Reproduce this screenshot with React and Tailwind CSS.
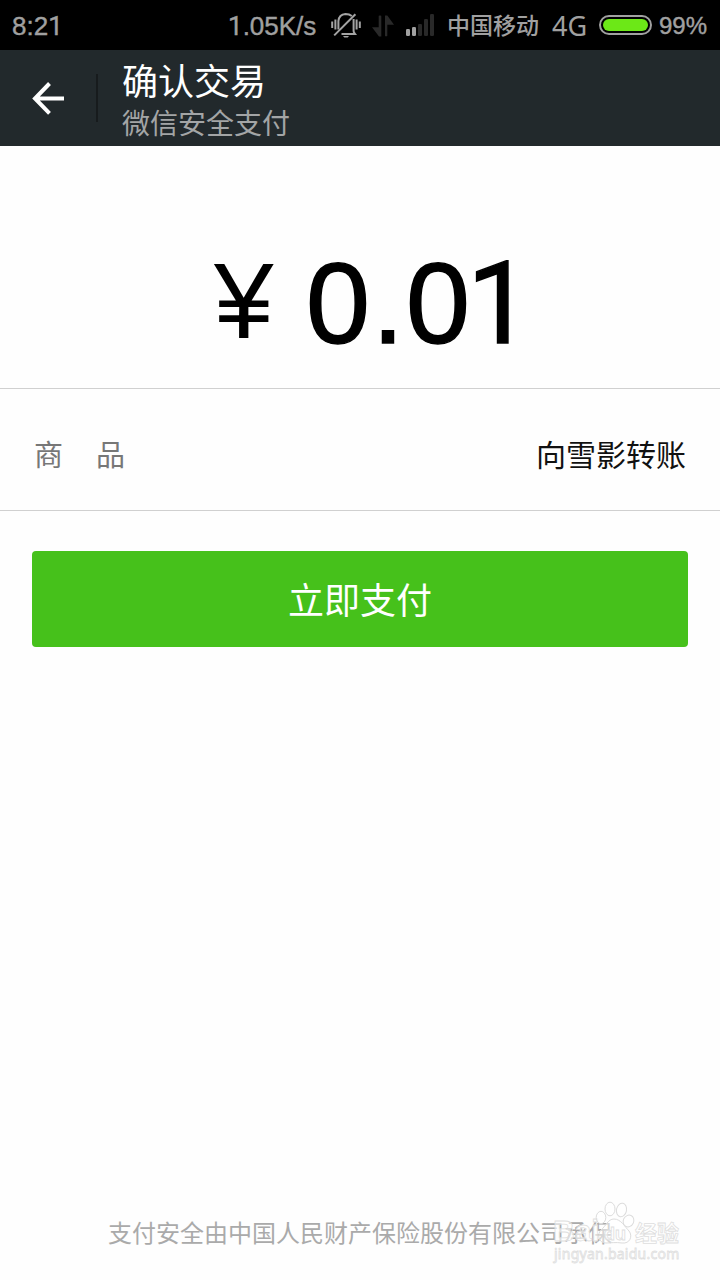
import React from 'react';

const MuteIcon = () => (
  <svg width="30" height="28" viewBox="0 0 30 28" fill="none" stroke="#a4a4a4" strokeWidth="2">
    <path d="M1.2 10.5v6.5M4.4 8.5V18.5M25.6 8.5V18.5M28.8 10.5v6.5" />
    <path d="M7.4 18.5V10C7.8 5.4 10.5 3.4 14.5 3c3 0 4.6.6 6.3 2" />
    <path d="M22.6 8v12c0 1.4.8 2 1.5 3H10.5" />
    <path d="M12 25h6l-1.3 1.6h-3.4z" fill="#a4a4a4" stroke="none" />
    <path d="M3.2 24.4 24.4 3.2" />
  </svg>
);

const DataIcon = () => (
  <svg width="22" height="22" viewBox="0 0 22 22" fill="#292929">
    <path d="M6.7 1.2C6.7.4 9.3.4 9.3 1.2V21.5H7L0 12.3h6.7z" />
    <path d="M13 .5h2.3L22 9.7h-6.7v11c0 .8-2.3.8-2.3 0z" />
  </svg>
);

const SignalIcon = () => (
  <svg width="28" height="22" viewBox="0 0 28 22">
    <g fill="#a0a0a0">
      <rect x="0" y="15" width="4" height="7" rx="1.2" />
      <rect x="6" y="13" width="4" height="9" rx="1.2" />
    </g>
    <g fill="#292929">
      <rect x="12" y="10" width="4" height="12" rx="1.2" />
      <rect x="18" y="5" width="4" height="17" rx="1.2" />
      <rect x="24" y="0" width="4" height="22" rx="1.2" />
    </g>
  </svg>
);

// Roboto's "1" has no foot, unlike Liberation Sans
const One = () => <span className="font-['Roboto',sans-serif]">1</span>;

function StatusBar() {
  return (
    <header className="flex h-[50px] items-center bg-black pt-[2px] pl-3 font-['Liberation_Sans',sans-serif] text-[26px] leading-none whitespace-nowrap text-[#a0a0a0]">
      <span className="w-[216px] [-webkit-text-stroke:0.4px_#a0a0a0]">8:2<One /></span>
      <span className="w-[103px] [-webkit-text-stroke:0.4px_#a0a0a0]"><One />.05K/s</span>
      <span className="-mt-[2px] w-[41px]"><MuteIcon /></span>
      <span className="w-[34px]"><DataIcon /></span>
      <span className="-mt-[2px] w-[41px]"><SignalIcon /></span>
      <span className="-mt-[3px] w-[105px] font-['Noto_Sans_CJK_SC',sans-serif] text-[23px] font-medium">中国移动</span>
      <span className="-mt-[2px] w-[47px] font-['Noto_Sans',sans-serif] text-[27px]">4G</span>
      <span className="-mt-[2px] mr-[7px] h-5 w-[53px] rounded-full border-2 border-[#a0a0a0] p-[2px]">
        <span className="block h-full rounded-full bg-[#6ce817]" />
      </span>
      <span className="text-[24px] [-webkit-text-stroke:0.4px_#a0a0a0]">99%</span>
    </header>
  );
}

function TitleBar() {
  return (
    <div className="flex h-24 items-center bg-[#22292c]">
      <svg className="ml-8" width="32" height="34" viewBox="0 0 32 34" fill="none" stroke="#fff" strokeWidth="4">
        <path d="M17.5 2.5 3 17.5l14.5 14.8M3 17.5h29" />
      </svg>
      <div className="ml-8 h-12 w-[2px] bg-[#171b1d]" />
      <div className="ml-6">
        <h1 className="mt-[3px] text-[36px] leading-[44px] text-white">确认交易</h1>
        <p className="text-[28px] leading-[42px] text-[#a3a5a6]">微信安全支付</p>
      </div>
    </div>
  );
}

function Watermark() {
  return (
    <div className="absolute top-[1200px] left-[551px] h-[64px] w-[130px] text-white/60 [-webkit-text-stroke:0.8px_#dedede]">
      <span className="absolute top-[14px] left-[2px] font-['Liberation_Sans',sans-serif] text-[30px] leading-[34px] font-bold">Bai</span>
      <svg className="absolute top-0 left-[42px]" width="42" height="44" viewBox="0 0 42 44" fill="#fff" fillOpacity="0.5" stroke="#dcdcdc">
        <ellipse cx="8" cy="17.5" rx="4.8" ry="6.2" />
        <ellipse cx="17" cy="9" rx="5" ry="6.8" />
        <ellipse cx="28.5" cy="10" rx="5" ry="6.8" transform="rotate(12 28.5 10)" />
        <ellipse cx="35.5" cy="21" rx="5.2" ry="6" transform="rotate(25 35.5 21)" />
        <path d="M21 19c-6 0-8 7-13 11-4 4-3 13 5 13 4 0 10-1 16 0 8 1 11-7 7-12-4-4-8-12-15-12z" />
      </svg>
      <span className="absolute top-[21px] left-[53px] font-['Liberation_Sans',sans-serif] text-[18px] leading-[26px] font-bold">du</span>
      <span className="absolute top-[16px] left-[84px] text-[22px] leading-[30px] font-bold">经验</span>
      <span className="absolute top-[44px] left-[3px] font-['Noto_Sans',sans-serif] text-[14px] leading-[20px] tracking-[0.25px]">jingyan.baidu.com</span>
    </div>
  );
}

export default function App() {
  return (
    <div className="relative flex h-[1280px] w-[720px] flex-col overflow-hidden bg-[#fefefe] font-['Noto_Sans_CJK_SC',sans-serif]">
      <StatusBar />
      <TitleBar />

      <div className="flex h-[243px] items-end border-b border-[#d0d0d0] pl-[214px] font-['Liberation_Sans',sans-serif] leading-none text-black">
        <span className="mb-[33px] w-[92px] text-[107px]">¥</span>
        <span className="mb-[27px] text-[115px] tracking-[2px] [-webkit-text-stroke:1.5px_#000]">0.0<span className="-ml-[5px]"><One /></span></span>
      </div>

      <div className="flex h-[122px] items-center justify-between border-b border-[#d0d0d0] px-[34px] pt-2">
        <span className="text-[29px] text-[#777]">商<span className="ml-[33px]">品</span></span>
        <span className="text-[30px] text-[#111]">向雪影转账</span>
      </div>

      <button className="mx-8 mt-10 h-24 rounded-[4px] bg-[#46c11b] pb-[2px] text-[36px] text-white">立即支付</button>

      <footer className="mt-auto pb-[30px] text-center text-[24px] leading-[36px] text-[#aaa]">
        支付安全由中国人民财产保险股份有限公司承保
      </footer>

      <Watermark />
    </div>
  );
}
